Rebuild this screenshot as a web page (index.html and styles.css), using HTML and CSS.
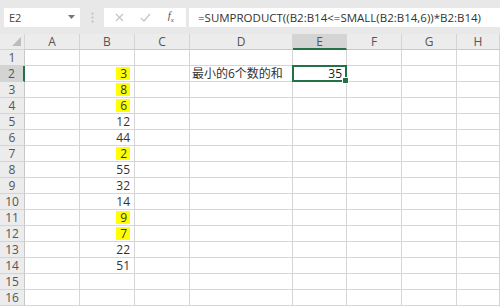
FILE: index.html
```html
<!DOCTYPE html>
<html lang="zh-CN">
<head>
    <meta charset="UTF-8">
    <title>SUMPRODUCT</title>
    <link rel="stylesheet" href="styles.css">
</head>
<body>
    <div class="formula-bar">
        <div class="name-box">
            <span>E2</span>
            <svg class="caret" width="7" height="4" viewBox="0 0 7 4"><path d="M0 0h7L3.5 4z" fill="#777"/></svg>
        </div>
        <div class="grip">
            <svg width="3" height="11" viewBox="0 0 3 11"><circle cx="1.5" cy="1.5" r="1" fill="#bbb"/><circle cx="1.5" cy="5.5" r="1" fill="#bbb"/><circle cx="1.5" cy="9.5" r="1" fill="#bbb"/></svg>
        </div>
        <div class="fx-buttons">
            <svg width="9" height="9" viewBox="0 0 9 9"><path d="M1 1l7 7M8 1L1 8" stroke="#c4c4c4" stroke-width="1.2"/></svg>
            <svg width="11" height="9" viewBox="0 0 11 9"><path d="M1 5l3 3 6-7" stroke="#c4c4c4" stroke-width="1.2" fill="none"/></svg>
            <span class="fx">f<sub>x</sub></span>
        </div>
        <div class="formula">=SUMPRODUCT((B2:B14&lt;=SMALL(B2:B14,6))*B2:B14)</div>
    </div>

    <div class="sheet">
        <div class="corner"><svg width="9" height="9" viewBox="0 0 9 9"><path d="M9 0v9H0z" fill="#bcbcbc"/></svg></div>
        <div class="col-head">A</div>
        <div class="col-head">B</div>
        <div class="col-head">C</div>
        <div class="col-head">D</div>
        <div class="col-head active">E</div>
        <div class="col-head">F</div>
        <div class="col-head">G</div>
        <div class="col-head">H</div>
    </div>
    <div class="sheet" id="rows"></div>

    <script>
        var values = { 2: [3, true], 3: [8, true], 4: [6, true], 5: [12], 6: [44], 7: [2, true],
                       8: [55], 9: [32], 10: [14], 11: [9, true], 12: [7, true], 13: [22], 14: [51] };
        var rows = document.getElementById('rows');
        var html = '';
        for (var r = 1; r <= 16; r++) {
            html += '<div class="row-head' + (r === 2 ? ' active' : '') + '">' + r + '</div>';
            for (var c = 0; c < 8; c++) {
                var inner = '';
                var cls = 'cell';
                if (c === 1 && values[r]) {
                    cls += ' num';
                    inner = values[r][1] ? '<span class="hl">' + values[r][0] + '</span>' : values[r][0];
                }
                if (r === 2 && c === 3) { inner = '最小的6个数的和'; cls += ' label'; }
                if (r === 2 && c === 4) { inner = '35<i class="handle"></i>'; cls += ' num selected'; }
                html += '<div class="' + cls + '">' + inner + '</div>';
            }
        }
        rows.innerHTML = html;
    </script>
</body>
</html>
```

FILE: styles.css
```css
body {
    margin: 0;
    font-family: "Open Sans", "Noto Sans CJK SC", sans-serif;
    color: #333;
    background: #fff;
    overflow: hidden;
}

.formula-bar {
    display: flex;
    align-items: center;
    height: 34px;
    background: #e8e8e8;
    padding: 0 0 0 4px;
    box-sizing: border-box;
}

.name-box {
    width: 76px;
    height: 19px;
    background: #fff;
    display: flex;
    align-items: center;
    justify-content: space-between;
    padding: 0 5px 0 5px;
    box-sizing: border-box;
    font-size: 11px;
    color: #444;
}

.grip {
    width: 24px;
    display: flex;
    justify-content: center;
}

.fx-buttons {
    width: 82px;
    height: 19px;
    background: #fff;
    display: flex;
    align-items: center;
    justify-content: space-around;
    padding: 0 4px 0 3px;
    box-sizing: border-box;
}

.fx {
    font-family: "Liberation Serif", serif;
    font-style: italic;
    font-size: 11px;
    color: #555;
}

.fx sub {
    font-size: 7px;
}

.formula {
    flex: 1;
    margin-left: 3px;
    height: 19px;
    background: #fff;
    padding-left: 9px;
    font-size: 11.5px;
    line-height: 19px;
    color: #333;
    white-space: nowrap;
    overflow: hidden;
}

.sheet {
    display: grid;
    grid-template-columns: 25px 55px 55px 55px 103px 54px 55px 55px 1fr;
    grid-auto-rows: 16px;
}

.sheet > div {
    box-sizing: border-box;
    border-right: 1px solid #d6d6d6;
    border-bottom: 1px solid #d6d6d6;
    font-size: 12px;
    line-height: 15px;
}

.corner {
    background: #ececec;
    display: flex;
    align-items: flex-end;
    justify-content: flex-end;
    padding: 0 3px 3px 0;
}

.sheet > .col-head {
    background: #ececec;
    text-align: center;
    color: #555;
    border-bottom-color: #c8c8c8;
    border-right-color: #d4d4d4;
}

.sheet > .col-head.active {
    background: #d4d4d4;
    border-bottom: 2px solid #217346;
}

.sheet > .row-head {
    background: #ececec;
    text-align: center;
    color: #555;
    border-right-color: #c8c8c8;
    border-bottom-color: #d4d4d4;
}

.sheet > .row-head.active {
    background: #d4d4d4;
    border-right: 2px solid #217346;
}

.num {
    text-align: right;
    padding-right: 4px;
}

.hl {
    background: #ffff00;
    padding: 0 3px 0 4px;
    display: inline-block;
    line-height: 13px;
}

.label {
    padding-left: 2px;
    white-space: nowrap;
}

.sheet > .selected {
    position: relative;
    border: 2px solid #217346;
    margin: -1px 0 0 -1px;
    line-height: 13px;
    padding-right: 3px;
    color: #222;
}

.handle {
    position: absolute;
    right: -4px;
    bottom: -4px;
    width: 5px;
    height: 5px;
    background: #217346;
    border: 1px solid #fff;
}
```
